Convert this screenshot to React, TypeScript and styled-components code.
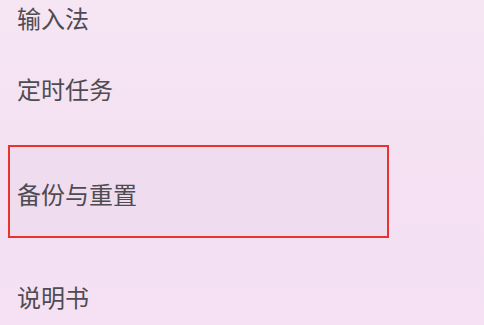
import React from "react";
import styled, { createGlobalStyle } from "styled-components";

const Global = createGlobalStyle`
  html, body { margin: 0; padding: 0; }
  body {
    width: 484px;
    height: 325px;
    overflow: hidden;
    background: linear-gradient(180deg, #f6e6f4 0%, #f4e1f2 45%, #f5e0f4 100%);
    font-family: "Noto Sans CJK SC", "Noto Sans", sans-serif;
  }
`;

const List = styled.div`
  display: flex;
  flex-direction: column;
  width: 484px;
  height: 325px;
  overflow: hidden;
`;

const Item = styled.div<{ $h: number; $pt?: number }>`
  display: flex;
  align-items: center;
  box-sizing: border-box;
  height: ${(p) => p.$h}px;
  padding-left: 17px;
  padding-top: ${(p) => p.$pt ?? 0}px;
  flex-shrink: 0;
`;

const Highlight = styled.div`
  display: flex;
  align-items: center;
  box-sizing: border-box;
  margin: 3px 0 0 8px;
  width: 381px;
  height: 93px;
  padding: 5px 0 0 7px;
  border: 2px solid #e8332f;
  background: #f0dcef;
  flex-shrink: 0;
`;

const Label = styled.span`
  font-size: 24px;
  line-height: 1;
  color: #4e4b51;
  letter-spacing: 0;
`;

export default function App() {
  return (
    <>
      <Global />
      <List>
        <Item $h={36}>
          <Label>输入法</Label>
        </Item>
        <Item $h={106}>
          <Label>定时任务</Label>
        </Item>
        <Highlight>
          <Label>备份与重置</Label>
        </Highlight>
        <Item $h={118}>
          <Label>说明书</Label>
        </Item>
      </List>
    </>
  );
}
